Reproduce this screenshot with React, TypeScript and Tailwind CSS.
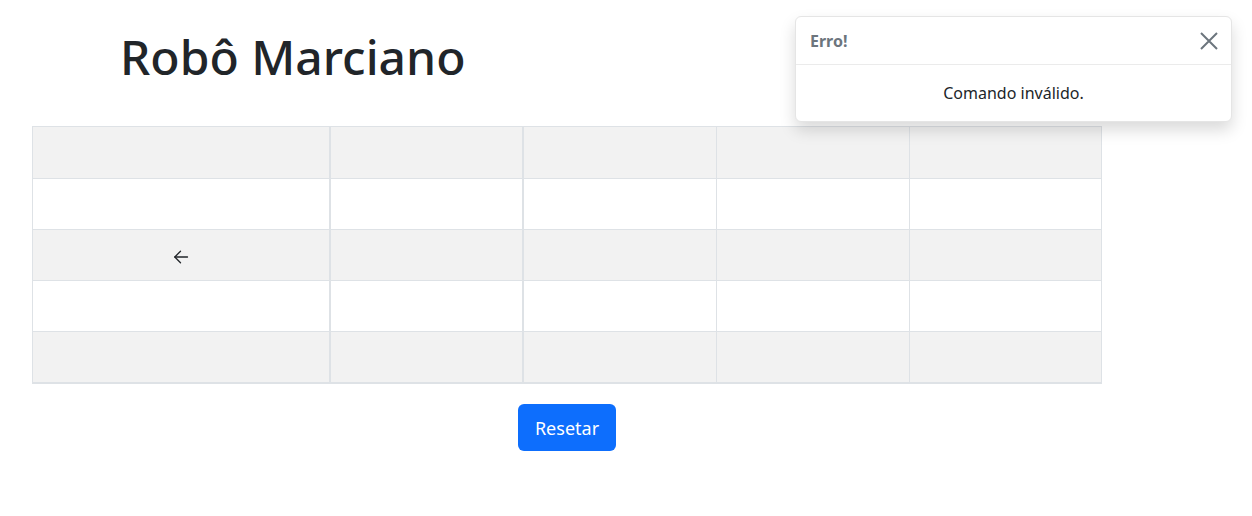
import React from "react";

const rows = 5;

export default function App() {
  const font = { fontFamily: '"Noto Sans", "Segoe UI", "Liberation Sans", sans-serif' };
  return (
    <div className="relative w-[1252px] h-[516px] bg-white text-[#212529]" style={font}>
      <div className="pl-[32px] pt-[27px]">
        <h1 className="pl-[88px] text-[48px] leading-[60px] font-medium text-[#212529] m-0">Robô Marciano</h1>
        <div className="mt-[39px] w-[1070px] border-t border-b-2 border-l border-r border-[#dee2e6]">
          {Array.from({ length: rows }).map((_, r) => (
            <div
              key={r}
              className={`flex ${r === 0 ? "h-[51px]" : "h-[51px] border-t border-[#dee2e6]"} ${r % 2 === 0 ? "bg-[#f2f2f2]" : "bg-white"}`}
            >
              <div className="w-[298px] border-r-2 border-[#dee2e6] flex items-center justify-center pt-[4px]">
                {r === 2 ? (
                  <svg width="16" height="16" viewBox="0 0 16 16" fill="none" stroke="#212529" strokeWidth="1.3" strokeLinecap="round" strokeLinejoin="round">
                    <path d="M14.5 8H1.8" />
                    <path d="M7.5 2.3L1.8 8l5.7 5.7" />
                  </svg>
                ) : null}
              </div>
              <div className="w-[193px] border-r-2 border-[#dee2e6]" />
              <div className="w-[193px] border-r border-[#dee2e6]" />
              <div className="w-[193px] border-r border-[#dee2e6]" />
              <div className="flex-1" />
            </div>
          ))}
        </div>
        <div className="w-[1070px] flex justify-center mt-[20px]">
          <button className="w-[98px] h-[47px] rounded-[6px] bg-[#0d6efd] text-white text-[18px] leading-[28px]" style={font}>
            Resetar
          </button>
        </div>
      </div>

      <div className="absolute top-[16px] right-[20px] w-[437px] bg-white rounded-[6px] border border-[#e5e5e5] shadow-[0_8px_16px_rgba(0,0,0,0.15)]">
        <div className="h-[48px] flex items-center justify-between pl-[14px] pr-[12px] border-b border-[#ebebeb]">
          <span className="text-[16px] font-bold text-[#6c757d]">Erro!</span>
          <svg width="20" height="20" viewBox="0 0 20 20" stroke="#6c757d" strokeWidth="2" strokeLinecap="butt">
            <path d="M2 2L18 18M18 2L2 18" />
          </svg>
        </div>
        <div className="h-[56px] flex items-center justify-center text-[16px] text-[#212529]">Comando inválido.</div>
      </div>
    </div>
  );
}
